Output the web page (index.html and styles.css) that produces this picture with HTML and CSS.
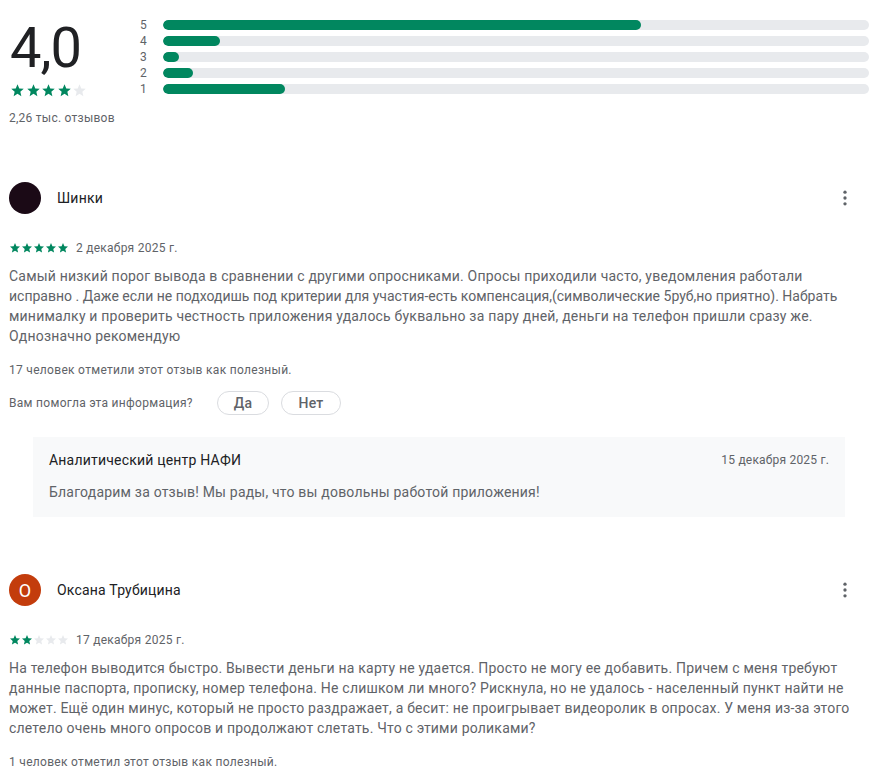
FILE: index.html
```html
<!DOCTYPE html>
<html lang="ru">
<head>
<meta charset="utf-8">
<link rel="stylesheet" href="styles.css">
</head>
<body>
<div class="page">
  <section class="summary">
    <div class="score">
      <div class="score-num">4,0</div>
      <div class="stars big">
        <svg viewBox="0 0 24 24"><path class="on" d="M12 17.27 18.18 21l-1.64-7.03L22 9.24l-7.19-.61L12 2 9.19 8.63 2 9.24l5.46 4.73L5.82 21z"/></svg>
        <svg viewBox="0 0 24 24"><path class="on" d="M12 17.27 18.18 21l-1.64-7.03L22 9.24l-7.19-.61L12 2 9.19 8.63 2 9.24l5.46 4.73L5.82 21z"/></svg>
        <svg viewBox="0 0 24 24"><path class="on" d="M12 17.27 18.18 21l-1.64-7.03L22 9.24l-7.19-.61L12 2 9.19 8.63 2 9.24l5.46 4.73L5.82 21z"/></svg>
        <svg viewBox="0 0 24 24"><path class="on" d="M12 17.27 18.18 21l-1.64-7.03L22 9.24l-7.19-.61L12 2 9.19 8.63 2 9.24l5.46 4.73L5.82 21z"/></svg>
        <svg viewBox="0 0 24 24"><path class="off" d="M12 17.27 18.18 21l-1.64-7.03L22 9.24l-7.19-.61L12 2 9.19 8.63 2 9.24l5.46 4.73L5.82 21z"/></svg>
      </div>
      <div class="count">2,26 тыс. отзывов</div>
    </div>
    <div class="bars">
      <div class="bar-row"><span class="bar-label">5</span><div class="track"><div class="fill" style="width:67.7%"></div></div></div>
      <div class="bar-row"><span class="bar-label">4</span><div class="track"><div class="fill" style="width:8.1%"></div></div></div>
      <div class="bar-row"><span class="bar-label">3</span><div class="track"><div class="fill" style="width:2.3%"></div></div></div>
      <div class="bar-row"><span class="bar-label">2</span><div class="track"><div class="fill" style="width:4.3%"></div></div></div>
      <div class="bar-row"><span class="bar-label">1</span><div class="track"><div class="fill" style="width:17.3%"></div></div></div>
    </div>
  </section>

  <article class="review first">
    <header class="rev-head">
      <div class="avatar dark"></div>
      <div class="rev-name">Шинки</div>
      <button class="more" aria-label="Ещё">
        <svg viewBox="0 0 24 24"><circle cx="12" cy="5" r="2"/><circle cx="12" cy="12" r="2"/><circle cx="12" cy="19" r="2"/></svg>
      </button>
    </header>
    <div class="rev-meta">
      <div class="stars small">
        <svg viewBox="0 0 24 24"><path class="on" d="M12 17.27 18.18 21l-1.64-7.03L22 9.24l-7.19-.61L12 2 9.19 8.63 2 9.24l5.46 4.73L5.82 21z"/></svg>
        <svg viewBox="0 0 24 24"><path class="on" d="M12 17.27 18.18 21l-1.64-7.03L22 9.24l-7.19-.61L12 2 9.19 8.63 2 9.24l5.46 4.73L5.82 21z"/></svg>
        <svg viewBox="0 0 24 24"><path class="on" d="M12 17.27 18.18 21l-1.64-7.03L22 9.24l-7.19-.61L12 2 9.19 8.63 2 9.24l5.46 4.73L5.82 21z"/></svg>
        <svg viewBox="0 0 24 24"><path class="on" d="M12 17.27 18.18 21l-1.64-7.03L22 9.24l-7.19-.61L12 2 9.19 8.63 2 9.24l5.46 4.73L5.82 21z"/></svg>
        <svg viewBox="0 0 24 24"><path class="on" d="M12 17.27 18.18 21l-1.64-7.03L22 9.24l-7.19-.61L12 2 9.19 8.63 2 9.24l5.46 4.73L5.82 21z"/></svg>
      </div>
      <span class="rev-date">2 декабря 2025 г.</span>
    </div>
    <p class="rev-text">Самый низкий порог вывода в сравнении с другими опросниками. Опросы приходили часто, уведомления работали <span class="tight">исправно . Даже если не подходишь под критерии для участия-есть компенсация,(символические 5руб,но приятно). Набрать</span> минималку и проверить честность приложения удалось буквально за пару дней, деньги на телефон пришли сразу же. Однозначно рекомендую</p>
    <div class="helpful">17 человек отметили этот отзыв как полезный.</div>
    <div class="vote">
      <span class="vote-q">Вам помогла эта информация?</span>
      <button class="pill yes">Да</button>
      <button class="pill no">Нет</button>
    </div>
    <div class="reply">
      <div class="reply-head">
        <span class="reply-name">Аналитический центр НАФИ</span>
        <span class="reply-date">15 декабря 2025 г.</span>
      </div>
      <div class="reply-text">Благодарим за отзыв! Мы рады, что вы довольны работой приложения!</div>
    </div>
  </article>

  <article class="review second">
    <header class="rev-head">
      <div class="avatar orange">О</div>
      <div class="rev-name">Оксана Трубицина</div>
      <button class="more" aria-label="Ещё">
        <svg viewBox="0 0 24 24"><circle cx="12" cy="5" r="2"/><circle cx="12" cy="12" r="2"/><circle cx="12" cy="19" r="2"/></svg>
      </button>
    </header>
    <div class="rev-meta">
      <div class="stars small">
        <svg viewBox="0 0 24 24"><path class="on" d="M12 17.27 18.18 21l-1.64-7.03L22 9.24l-7.19-.61L12 2 9.19 8.63 2 9.24l5.46 4.73L5.82 21z"/></svg>
        <svg viewBox="0 0 24 24"><path class="on" d="M12 17.27 18.18 21l-1.64-7.03L22 9.24l-7.19-.61L12 2 9.19 8.63 2 9.24l5.46 4.73L5.82 21z"/></svg>
        <svg viewBox="0 0 24 24"><path class="off" d="M12 17.27 18.18 21l-1.64-7.03L22 9.24l-7.19-.61L12 2 9.19 8.63 2 9.24l5.46 4.73L5.82 21z"/></svg>
        <svg viewBox="0 0 24 24"><path class="off" d="M12 17.27 18.18 21l-1.64-7.03L22 9.24l-7.19-.61L12 2 9.19 8.63 2 9.24l5.46 4.73L5.82 21z"/></svg>
        <svg viewBox="0 0 24 24"><path class="off" d="M12 17.27 18.18 21l-1.64-7.03L22 9.24l-7.19-.61L12 2 9.19 8.63 2 9.24l5.46 4.73L5.82 21z"/></svg>
      </div>
      <span class="rev-date">17 декабря 2025 г.</span>
    </div>
    <p class="rev-text">На телефон выводится быстро. Вывести деньги на карту не удается. Просто не могу ее добавить. Причем с меня требуют данные паспорта, прописку, номер телефона. Не слишком ли много? Рискнула, но не удалось - населенный пункт найти не может. Ещё один минус, который не просто раздражает, а бесит: не проигрывает видеоролик в опросах. У меня из-за этого слетело очень много опросов и продолжают слетать. Что с этими роликами?</p>
    <div class="helpful">1 человек отметил этот отзыв как полезный.</div>
  </article>
</div>
</body>
</html>
```

FILE: styles.css
```css
* { box-sizing: border-box; }
html, body { margin: 0; padding: 0; background: #fff; }
body {
  font-family: Roboto, "Noto Sans", Arial, sans-serif;
  color: #202124;
  overflow: hidden;
}
.page {
  padding: 16px 24px 0 9px;
}
.summary {
  display: flex;
  align-items: flex-start;
}
.score {
  width: 131px;
  flex: none;
}
.score-num {
  font-size: 56px;
  line-height: 64px;
  letter-spacing: -1px;
  margin-left: 1px;
  color: #202124;
}
.stars { display: flex; }
.stars svg { display: block; }
.stars .on { fill: #01875f; }
.stars .off { fill: #e8eaed; }
.stars.big { gap: 0.5px; margin-top: 3px; margin-left: 1px; }
.stars.big svg { width: 15px; height: 15px; }
.count {
  font-size: 12px;
  line-height: 16px;
  letter-spacing: 0.25px;
  color: #5f6368;
  margin-top: 12px;
}
.bars {
  flex: 1;
  display: flex;
  flex-direction: column;
  margin-right: -24px;
  margin-top: 1px;
}
.bar-row {
  display: flex;
  align-items: center;
  height: 16px;
}
.bar-label {
  width: 23px;
  font-size: 12px;
  color: #5f6368;
  line-height: 16px;
}
.track {
  flex: 1;
  height: 10px;
  border-radius: 5px;
  background: #e8eaed;
  overflow: hidden;
}
.fill {
  height: 100%;
  background: #01875f;
  border-radius: 5px;
}
.review.first { margin-top: 56px; }
.review.second { margin-top: 57px; }
.rev-head {
  display: flex;
  align-items: center;
  height: 32px;
}
.avatar {
  width: 32px;
  height: 32px;
  border-radius: 50%;
  flex: none;
  display: flex;
  align-items: center;
  justify-content: center;
  color: #fff;
  font-size: 18px;
}
.avatar.dark { background: #1b0a16; }
.avatar.orange { background: #c33c0c; }
.rev-name {
  margin-left: 16px;
  font-size: 14px;
  line-height: 20px;
  letter-spacing: 0.2px;
  color: #202124;
  flex: 1;
}
.more {
  border: 0;
  background: none;
  padding: 0;
  width: 24px;
  height: 24px;
  margin-right: -12px;
  display: flex;
  align-items: center;
  justify-content: center;
}
.more svg { width: 20px; height: 20px; fill: #5f6368; }
.rev-meta {
  display: flex;
  align-items: center;
  margin-top: 26px;
  height: 16px;
}
.stars.small svg { width: 12px; height: 12px; }
.stars.small { gap: 0; }
.rev-date {
  margin-left: 7px;
  font-size: 12px;
  letter-spacing: 0.25px;
  color: #5f6368;
}
.rev-text {
  margin: 10px -12px 0 0;
  font-size: 14px;
  line-height: 20px;
  letter-spacing: 0.2px;
  color: #5f6368;
}
.rev-text .tight { letter-spacing: 0; }
.helpful {
  margin-top: 16px;
  font-size: 12px;
  line-height: 16px;
  letter-spacing: 0.3px;
  color: #5f6368;
}
.vote {
  display: flex;
  align-items: center;
  margin-top: 13px;
}
.vote-q {
  font-size: 12px;
  letter-spacing: 0.3px;
  color: #5f6368;
  width: 208px;
}
.pill {
  font-family: inherit;
  height: 24px;
  border: 1px solid #dadce0;
  border-radius: 12px;
  background: #fff;
  color: #5f6368;
  font-size: 14px;
  font-weight: 500;
  letter-spacing: 0.25px;
  padding: 0;
  margin-right: 12px;
}
.pill.yes { width: 52px; }
.pill.no { width: 60px; }
.reply {
  margin: 22px 0 0 24px;
  background: #f8f9fa;
  padding: 13px 16px 15px 16px;
}
.reply-head {
  display: flex;
  justify-content: space-between;
  align-items: center;
}
.reply-name {
  font-size: 14px;
  line-height: 20px;
  letter-spacing: 0.2px;
  color: #202124;
}
.reply-date {
  font-size: 12px;
  letter-spacing: 0.2px;
  color: #5f6368;
}
.reply-text {
  margin-top: 12px;
  font-size: 14px;
  line-height: 20px;
  letter-spacing: 0.2px;
  color: #5f6368;
}
```
